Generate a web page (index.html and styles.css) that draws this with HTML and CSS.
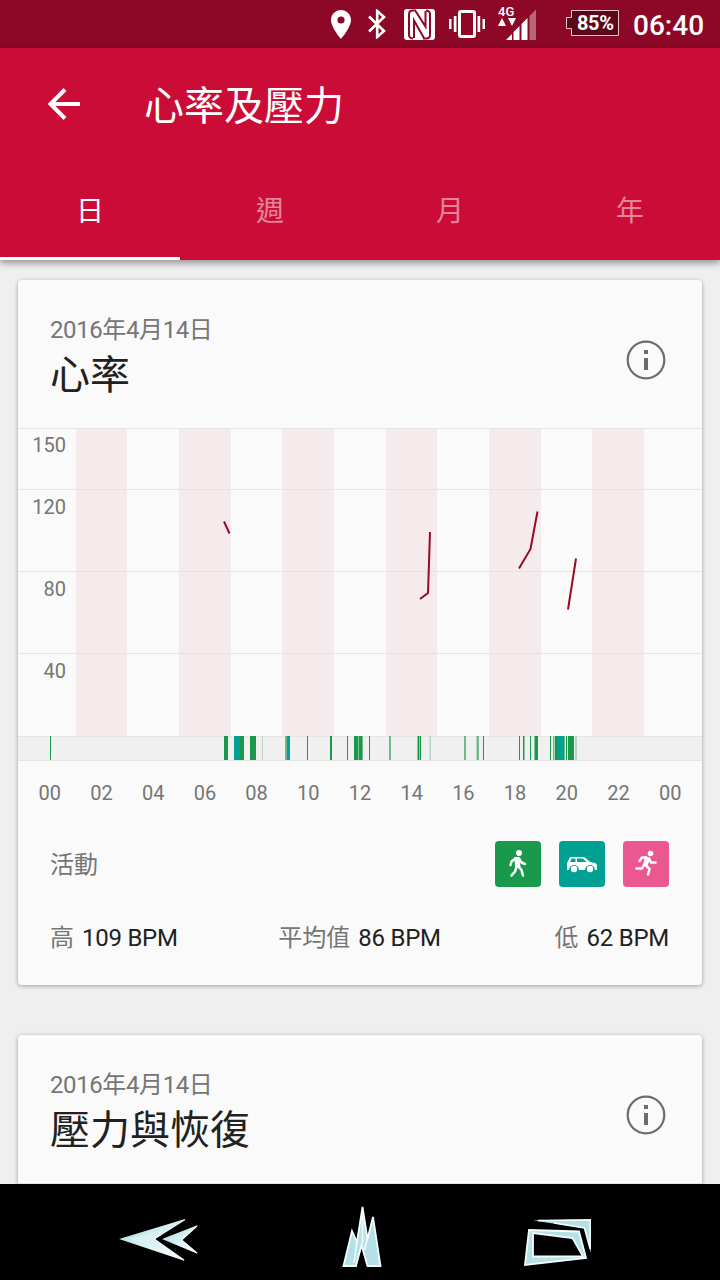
FILE: index.html
```html
<!DOCTYPE html>
<html lang="zh-Hant">
<head>
    <meta charset="UTF-8">
    <meta name="viewport" content="width=device-width, initial-scale=1.0">
    <title>心率及壓力</title>
    <link rel="stylesheet" href="styles.css">
</head>
<body>
    <div class="status-bar">
        <svg class="icon-location" width="20" height="29" viewBox="0 0 20 29">
            <path fill="#fff" fill-rule="evenodd" d="M10 0C4.500 0 0 4.400 0 10c0 7.300 10 19 10 19s10-11.700 10-19C20 4.400 15.500 0 10 0zm0 13.600a3.600 3.600 0 1 1 0-7.200 3.600 3.600 0 0 1 0 7.200z"/>
        </svg>
        <svg class="icon-bluetooth" width="18" height="30" viewBox="0 0 18 30">
            <path fill="none" stroke="#fff" stroke-width="2.600" d="M1 7.500L16 22 9.200 28V2L16 8 1 22.500"/>
        </svg>
        <svg class="icon-nfc" width="31" height="31" viewBox="0 0 31 31">
            <rect width="31" height="31" rx="3" fill="#fff"/>
            <path fill="none" stroke="#8c0826" stroke-width="2" d="M12 1.500H8.500Q5 1.500 5 5.500V26q0 3 4 3.500"/>
            <path fill="none" stroke="#8c0826" stroke-width="2" d="M19 29.500h3.500q3.500 0 3.500-4V5q0-3-4-3.500"/>
            <path fill="none" stroke="#8c0826" stroke-width="2" d="M11.500 2L21.500 17.500V2M10 29V11.500L20 29"/>
        </svg>
        <svg class="icon-vibrate" width="36" height="28" viewBox="0 0 36 28">
            <rect x="10.500" y="1.500" width="15" height="25" rx="1.500" fill="none" stroke="#fff" stroke-width="3"/>
            <path fill="#fff" d="M0 9h2.500v10H0zM4.800 6h2.700v16H4.800zM28.500 6h2.700v16h-2.700zM33.500 9H36v10h-2.500z"/>
        </svg>
        <svg class="icon-signal" width="40" height="36" viewBox="0 0 40 36">
            <text x="0" y="11" class="signal-text">4G</text>
            <path fill="#fff" d="M0 21l4-8 4 8zM10 13h8l-4 8z"/>
            <path fill="#fff" d="M8 35l6-6v6zM15.500 27l6-6v14h-6zM23.500 19l6-6v22h-6z"/>
            <path fill="#b8667a" d="M31.500 11l6.500-6.500V35h-6.500z"/>
        </svg>
        <div class="battery">
            <svg class="battery-shape" width="54" height="28" viewBox="0 0 54 28">
                <path fill="#5a0719" stroke="#e8c4cc" d="M5.500 1.500h47v25h-47v-7h-5v-11h5z"/>
            </svg>
            <span class="battery-text">85%</span>
        </div>
        <span class="clock">06:40</span>
    </div>

    <header class="header">
        <div class="toolbar">
            <svg class="back" width="32" height="32" viewBox="0 0 32 32">
                <path fill="none" stroke="#fff" stroke-width="4" d="M32 16H3M17 1.500L2.500 16 17 30.500"/>
            </svg>
            <h1>心率及壓力</h1>
        </div>
        <nav class="tabs">
            <div class="tab active">日</div>
            <div class="tab">週</div>
            <div class="tab">月</div>
            <div class="tab">年</div>
        </nav>
    </header>

    <main class="content">
        <section class="card">
            <div class="card-head">
                <div>
                    <div class="date">2016年4月14日</div>
                    <h2>心率</h2>
                </div>
                <svg class="info" width="40" height="40" viewBox="0 0 40 40">
                    <circle cx="20" cy="20" r="18.300" fill="none" stroke="#6c6c6c" stroke-width="2.200"/>
                    <path fill="#6c6c6c" d="M18 10h4v4h-4zM18 18h4v12h-4z"/>
                </svg>
            </div>

            <svg class="chart" width="684" height="333" viewBox="18 0 684 333">
                <!-- time bands -->
                <g fill="#f5ebed">
                    <rect x="76" y="0" width="51" height="308"/>
                    <rect x="179" y="0" width="52" height="308"/>
                    <rect x="282" y="0" width="52" height="308"/>
                    <rect x="386" y="0" width="51" height="308"/>
                    <rect x="489" y="0" width="52" height="308"/>
                    <rect x="592" y="0" width="52" height="308"/>
                </g>
                <rect x="18" y="308" width="684" height="25" fill="#f0f0f0"/>
                <path stroke="#e5e3e3" d="M18 .5h684M18 61.500h684M18 143.500h684M18 225.500h684M18 308.500h684M18 332.500h684"/>
                <g class="axis-text">
                    <text x="66" y="24">150</text>
                    <text x="66" y="86">120</text>
                    <text x="66" y="168">80</text>
                    <text x="66" y="250">40</text>
                </g>
                <!-- heart rate -->
                <g class="rate-line">
                    <path d="M224 93.500L229.500 105.500"/>
                    <path d="M420 171L428 165L430 104"/>
                    <path d="M519 140.500L530.500 121L537.500 83.500"/>
                    <path d="M568 181.500L576 130.500"/>
                </g>
                <!-- activity -->
                <g fill="#1a994d">
                    <path d="M50 308h1v24h-1zM224 308h4v24h-4zM240 308h4v24h-4zM250 308h6v24h-6zM307 308h1v24h-1zM330 308h2v24h-2z"/>
                    <path d="M354 308h4v24h-4zM358.500 308h3.500v24h-3.500zM369 308h1v24h-1zM417.500 308h1.500v24h-1.500zM419.500 308h1.500v24h-1.500z"/>
                    <path d="M483 308h1v24h-1zM519 308h1v24h-1zM523 308h1.500v24h-1.500zM530 308h1v24h-1zM534.500 308h3.500v24h-3.500z"/>
                    <path d="M550 308h1v24h-1zM555 308h3v24h-3zM566 308h1v24h-1zM568 308h6v24h-6z"/>
                </g>
                <g fill="#6fb98c">
                    <path d="M285 308h2v24h-2zM362 308h1v24h-1zM389 308h2v24h-2zM464 308h2v24h-2zM476.500 308h2.500v24h-2.500zM553 308h1.500v24h-1.500zM564 308h1v24h-1z"/>
                </g>
                <g fill="#b5d6c2">
                    <path d="M262 308h1v24h-1zM429.500 308h1.500v24h-1.500zM575 308h2v24h-2z"/>
                </g>
                <g fill="#00a193">
                    <path d="M234 308h6v24h-6zM287 308h3v24h-3zM347 308h1v24h-1zM558 308h6v24h-6z"/>
                </g>
            </svg>
            <div class="hours">
                <span>00</span><span>02</span><span>04</span><span>06</span><span>08</span><span>10</span><span>12</span><span>14</span><span>16</span><span>18</span><span>20</span><span>22</span><span>00</span>
            </div>

            <div class="activity">
                <span class="label">活動</span>
                <div class="badges">
                    <div class="badge walk">
                        <svg width="46" height="46" viewBox="0 0 46 46">
                            <circle cx="24" cy="12" r="3"/>
                            <path class="limb" d="M21 17l-4.500 3.500-1 3.500M24.500 18l2 3.500 3.500 1.500M21.500 26l-1.500 4.500-3.500 4M23 25l3.500 4 1.500 5.500"/>
                            <path d="M19.500 16h5l1 10h-5.500z"/>
                        </svg>
                    </div>
                    <div class="badge car">
                        <svg width="46" height="46" viewBox="0 0 46 46">
                            <path fill-rule="evenodd" d="M8 29v-7l3-5.500Q11.500 16 12.500 16H24q1.500 0 2.500 1l4.500 4 5 1q2 .6 2 3v4h-2a5 5 0 0 0-10 0h-6a5 5 0 0 0-10 0zM12.500 17.500L11 21h5.500v-3.500zM18 17.500V21h9.500l-3-3q-.5-.5-1.500-.5z"/>
                            <circle cx="15" cy="28" r="3.200"/>
                            <circle cx="31" cy="28" r="3.200"/>
                        </svg>
                    </div>
                    <div class="badge run">
                        <svg width="46" height="46" viewBox="0 0 46 46">
                            <circle cx="27.500" cy="12.500" r="2.800"/>
                            <path class="limb" d="M23 16.500h-4L16.500 20M26 17.500l2 4h4.500M21 24l-2 3.500h-5.500M23 24.500l3.500 3.500-1.500 5.500"/>
                            <path d="M22 15l5.500 2-3.500 9-4-1.500z"/>
                        </svg>
                    </div>
                </div>
            </div>

            <div class="stats">
                <div class="stat"><span class="label">高</span> <span class="value">109 BPM</span></div>
                <div class="stat"><span class="label">平均值</span> <span class="value">86 BPM</span></div>
                <div class="stat last"><span class="label">低</span> <span class="value">62 BPM</span></div>
            </div>
        </section>

        <section class="card">
            <div class="card-head">
                <div>
                    <div class="date">2016年4月14日</div>
                    <h2>壓力與恢復</h2>
                </div>
                <svg class="info" width="40" height="40" viewBox="0 0 40 40">
                    <circle cx="20" cy="20" r="18.300" fill="none" stroke="#6c6c6c" stroke-width="2.200"/>
                    <path fill="#6c6c6c" d="M18 10h4v4h-4zM18 18h4v12h-4z"/>
                </svg>
            </div>
            <div class="card-rule"></div>
        </section>
    </main>

    <footer class="nav-bar">
        <svg class="nav-back" width="80" height="44" viewBox="0 0 80 44">
            <defs>
                <linearGradient id="ice" x1="0" y1="0" x2="1" y2="1">
                    <stop offset="0" stop-color="#9fd8e2"/>
                    <stop offset=".55" stop-color="#dff3f5"/>
                    <stop offset="1" stop-color="#ffffff"/>
                </linearGradient>
            </defs>
            <path fill="url(#ice)" d="M0 20L66 0 36 20 66 42z"/>
            <path fill="#dcf1f4" d="M10 20L44 12 34 20 44 30z"/>
            <path fill="url(#ice)" d="M43 20L79 6 63 21 79 35z"/>
            <path fill="none" stroke="#f0fafb" stroke-width="1.200" d="M66 .5L35 20 65 41M78 7L62.500 21 78 34"/>
        </svg>
        <svg class="nav-home" width="40" height="65" viewBox="0 0 40 65">
            <path fill="#b4e0e6" stroke="#f4fcfd" stroke-width="1.800" d="M1.500 63L10 28l5 11L20.500 4l5 32L31 14l7.500 49H25.500L19.500 42 14 63z"/>
            <path fill="none" stroke="#eefafb" stroke-width="1.800" d="M15 38l-3 22M25.500 35l-3 12M20.500 6v34"/>
        </svg>
        <svg class="nav-recent" width="68" height="48" viewBox="0 0 68 48">
            <path fill="#b4e0e6" d="M9 1.500L67 0v34L60 9z"/>
            <path fill="none" stroke="#f4fcfd" stroke-width="1.600" d="M14 1.500L66.200 1v29L60.500 9 30 4"/>
            <path fill="#b4e0e6" stroke="#f4fcfd" stroke-width="1.800" fill-rule="evenodd" d="M5 11l50 1.500L62 39 1 46zM9 14v23.500h50L48.500 19z"/>
        </svg>
    </footer>
</body>
</html>
```
FILE: styles.css
```css
* {
    margin: 0;
    padding: 0;
    box-sizing: border-box;
}

body {
    width: 720px;
    height: 1280px;
    overflow: hidden;
    display: flex;
    flex-direction: column;
    background: #efefef;
    color: #212121;
    font-family: Roboto, "Noto Sans CJK TC", sans-serif;
}

svg {
    display: block;
    flex: none;
}

.status-bar {
    height: 48px;
    flex: none;
    display: flex;
    align-items: flex-start;
    padding-left: 331px;
    background: #8c0826;
    color: #fff;
}

.icon-location {
    margin-top: 10px;
}

.icon-bluetooth {
    margin: 9px 0 0 17px;
}

.icon-nfc {
    margin: 9px 0 0 18px;
}

.icon-vibrate {
    margin: 10px 0 0 14px;
}

.icon-signal {
    margin: 5px 0 0 13px;
}

.signal-text {
    font-size: 13px;
    font-weight: 500;
    fill: #fff;
}

.battery {
    position: relative;
    margin: 9px 0 0 28px;
}

.battery-text {
    position: absolute;
    left: 11px;
    top: 2px;
    font-size: 20px;
    font-weight: 700;
    line-height: 24px;
    letter-spacing: -0.4px;
}

.clock {
    margin: 9px 0 0 13px;
    font-size: 28px;
    font-weight: 500;
    line-height: 34px;
}

.header {
    height: 212px;
    flex: none;
    position: relative;
    background: #cb0c36;
    color: #fff;
    box-shadow: 0 3px 7px rgba(0, 0, 0, 0.4);
}

.toolbar {
    height: 112px;
    display: flex;
    align-items: center;
    padding-left: 48px;
}

h1 {
    margin-left: 64px;
    padding-top: 5px;
    font-size: 40px;
    font-weight: 400;
    line-height: 48px;
}

.tabs {
    height: 100px;
    display: flex;
}

.tab {
    flex: 1;
    text-align: center;
    font-size: 28px;
    line-height: 103px;
    color: rgba(255, 255, 255, 0.5);
}

.tab.active {
    color: #fff;
    border-bottom: 3px solid #fff;
}

.content {
    flex: 1;
    min-height: 0;
    overflow: hidden;
    display: flex;
    flex-direction: column;
    gap: 50px;
    padding: 20px 18px 0;
}

.card {
    flex: none;
    height: 705px;
    background: #fafafa;
    border-radius: 4px;
    box-shadow: 0 1px 4px rgba(0, 0, 0, 0.35);
}

.card-head {
    height: 148px;
    display: flex;
    justify-content: space-between;
    align-items: flex-start;
    padding: 34px 36px 0 32px;
}

.date {
    font-size: 24px;
    line-height: 32px;
    letter-spacing: -0.4px;
    color: #757575;
}

h2 {
    font-size: 40px;
    font-weight: 400;
    line-height: 59px;
}

.info {
    margin-top: 26px;
}

.card-rule {
    height: 1px;
    background: #e3e1e1;
}

.axis-text {
    font-size: 20px;
    text-anchor: end;
    fill: #757575;
}

.rate-line path {
    fill: none;
    stroke: #960a28;
    stroke-width: 2;
}

.hours {
    display: grid;
    grid-template-columns: repeat(13, 1fr);
    margin: 18px 6px 0;
    font-size: 20px;
    line-height: 28px;
    text-align: center;
    color: #757575;
}

.activity {
    display: flex;
    justify-content: space-between;
    height: 46px;
    margin-top: 34px;
    padding: 0 33px 0 32px;
    font-size: 24px;
    line-height: 49px;
}

.label {
    color: #757575;
}

.value {
    letter-spacing: -0.25px;
}

.badges {
    display: flex;
    gap: 18px;
}

.badge {
    width: 46px;
    height: 46px;
    border-radius: 4px;
    fill: #fff;
}

.limb {
    fill: none;
    stroke: #fff;
    stroke-width: 2.5;
    stroke-linecap: round;
    stroke-linejoin: round;
}

.walk {
    background: #1a994d;
}

.car {
    background: #00a193;
}

.run {
    background: #eb5890;
}

.stats {
    display: grid;
    grid-template-columns: 1fr auto 1fr;
    margin-top: 33px;
    padding: 0 33px 0 32px;
    font-size: 24px;
    line-height: 36px;
}

.stat {
    display: flex;
    gap: 8px;
}

.stat.last {
    justify-content: flex-end;
}

.nav-bar {
    height: 96px;
    flex: none;
    display: flex;
    align-items: flex-start;
    padding-left: 119px;
    background: #000;
}

.nav-back {
    margin-top: 35px;
}

.nav-home {
    margin: 19px 0 0 143px;
}

.nav-recent {
    margin: 35px 0 0 142px;
}
```
